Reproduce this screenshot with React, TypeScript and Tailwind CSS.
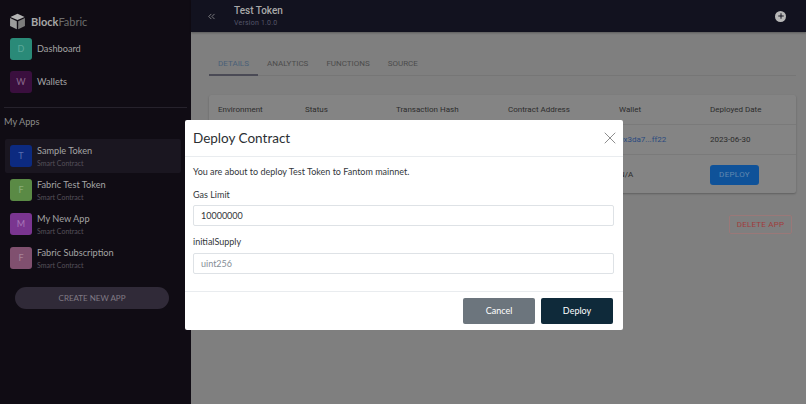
import React from "react";
import { ChevronsLeft, Plus, X } from "lucide-react";

// colours are the dimmed ones, as seen behind the modal backdrop
const apps = [
  { letter: "T", name: "Sample Token", color: "bg-[#0c2a80] text-[#5a70b0]", active: true },
  { letter: "F", name: "Fabric Test Token", color: "bg-[#5a8a45] text-[#8aae78]" },
  { letter: "M", name: "My New App", color: "bg-[#7a3590] text-[#a878b8]" },
  { letter: "F", name: "Fabric Subscription", color: "bg-[#80506f] text-[#a88498]" },
];

const columns = ["Environment", "Status", "Transaction Hash", "Contract Address", "Wallet", "Deployed Date"];
const colGrid = "grid grid-cols-[87px_91px_112px_111px_91px_1fr] pl-[9px] items-center";

const Logo = () => (
  <svg viewBox="0 0 24 24" className="w-[17px] h-[17px]">
    <path d="M12 1 L22 5.5 L12 10 L2 5.5 Z" fill="#b4b4b4" />
    <path d="M1.5 7 L11 11.5 V23 L1.5 18.5 Z" fill="#9c9c9c" />
    <path d="M22.5 7 L13 11.5 V23 L22.5 18.5 Z" fill="#7c7c7c" />
  </svg>
);

const Sidebar = () => (
  <aside className="w-[191px] shrink-0 h-full bg-[#100c14] font-['Lato',sans-serif]">
    <div className="flex items-start gap-[5px] pl-[9px] pt-[13px] h-[38px]">
      <Logo />
      <span className="text-[11px] leading-[17px] text-[#a8a8a8]">
        <span className="font-bold">Block</span>
        <span className="text-[#6c6c6c]">Fabric</span>
      </span>
    </div>
    <div className="pl-[10px] flex flex-col gap-[11px]">
      <div className="flex items-center gap-[5px] h-[22px]">
        <div className="w-[22px] h-[22px] rounded-[3px] bg-[#2a8a78] text-[#5aa898] text-[9px] flex items-center justify-center">D</div>
        <span className="text-[9.2px] text-[#a4a4a4]">Dashboard</span>
      </div>
      <div className="flex items-center gap-[5px] h-[22px]">
        <div className="w-[22px] h-[22px] rounded-[3px] bg-[#3a0f3e] text-[#8a6a8c] text-[9px] flex items-center justify-center">W</div>
        <span className="text-[9.2px] text-[#a4a4a4]">Wallets</span>
      </div>
    </div>
    <div className="mx-[4px] mt-[14px] border-t border-[#26222c]" />
    <div className="pl-[4px] mt-[7px] text-[9.2px] leading-[14px] text-[#8c8c8c]">My Apps</div>
    <div className="mt-[10px] flex flex-col">
      {apps.map((app) => (
        <div
          key={app.name}
          className={`ml-[5px] mr-[10px] h-[34px] pl-[5px] flex items-center gap-[5px] rounded-[2px] ${app.active ? "bg-[#1a1620]" : ""}`}
        >
          <div className={`w-[22px] h-[22px] rounded-[3px] text-[9px] flex items-center justify-center ${app.color}`}>{app.letter}</div>
          <div className="flex flex-col">
            <span className="text-[9.2px] leading-[14px] text-[#a4a4a4]">{app.name}</span>
            <span className="text-[7px] leading-[10px] text-[#55505a]">Smart Contract</span>
          </div>
        </div>
      ))}
    </div>
    <div className="ml-[15px] mr-[22px] mt-[12px] h-[22px] rounded-full bg-[#302a38] text-[#807a85] text-[8px] flex items-center justify-center">CREATE NEW APP</div>
  </aside>
);

const Main = () => (
  <main className="flex-1 h-full bg-[#7f7f7f] font-['Roboto',sans-serif] flex flex-col">
    <header className="h-[32px] shrink-0 bg-[#12121f] flex items-center justify-between pl-[15px] pr-[20px] shadow-[0_1px_2px_rgba(0,0,0,0.3)]">
      <div className="flex items-center gap-[17px]">
        <ChevronsLeft className="w-[11px] h-[11px] text-[#a8a8a8]" strokeWidth={1.5} />
        <div className="flex flex-col">
          <span className="text-[10px] leading-[14px] font-medium text-[#a8a8a8]">Test Token</span>
          <span className="text-[7px] leading-[11px] text-[#55566a] tracking-[0.2px]">Version 1.0.0</span>
        </div>
      </div>
      <div className="w-[11px] h-[11px] rounded-full bg-[#b8b8b8] flex items-center justify-center">
        <Plus className="w-[8px] h-[8px] text-[#12121f]" strokeWidth={3} />
      </div>
    </header>
    <div className="ml-[18px] mr-[10px] mt-[21px]">
      <nav className="flex border-b border-[#767676] h-[23px] text-[8px] text-[#4c4c4c]">
        <div className="w-[49px] h-[23px] flex items-start justify-center pt-[5px] border-b-2 border-[#4a4a55] text-[#4a6078]">DETAILS</div>
        <div className="ml-[9px] pt-[5px]">ANALYTICS</div>
        <div className="ml-[18px] pt-[5px]">FUNCTIONS</div>
        <div className="ml-[18px] pt-[5px]">SOURCE</div>
      </nav>
      <div className="mt-[19px] bg-[#848484] rounded-[2px] shadow-[0_1px_2px_rgba(0,0,0,0.25)] text-[8px] text-[#2c2c2c]">
        <div className={`${colGrid} h-[30px] pt-[1px] border-b border-[#7a7a7a]`}>
          {columns.map((c) => (
            <div key={c}>{c}</div>
          ))}
        </div>
        <div className={`${colGrid} h-[30px] pt-[1px] border-b border-[#7a7a7a]`}>
          <div className="col-start-5 text-[#2a4a80]">0x3da7...ff22</div>
          <div>2023-06-30</div>
        </div>
        <div className={`${colGrid} h-[38px] pt-[1px]`}>
          <div className="col-start-5">N/A</div>
          <div>
            <div className="w-[49px] h-[20px] rounded-[3px] bg-[#0f5299] text-[#6088b0] tracking-[0.3px] flex items-center justify-center">DEPLOY</div>
          </div>
        </div>
      </div>
      <div className="mt-[22px] flex justify-end pr-[4px]">
        <div className="w-[63px] h-[19px] rounded-[2px] border border-[#9a7878] text-[#a03c3c] text-[8px] tracking-[0.2px] flex items-center justify-center">DELETE APP</div>
      </div>
    </div>
  </main>
);

const Modal = () => (
  <div className="absolute left-[185px] top-[120px] w-[438px] h-[210px] bg-white rounded-[2px] flex flex-col text-[#212529] font-['Lato',sans-serif]">
    <div className="h-[37px] shrink-0 border-b border-[#e9ecef] flex items-center justify-between pl-[8px] pr-[3px]">
      <span className="text-[13.5px] text-[#2b2f33]">Deploy Contract</span>
      <X className="w-[20px] h-[20px] text-[#666]" strokeWidth={0.9} />
    </div>
    <div className="flex-1 pl-[8px] pr-[9px] pt-[9px] text-[9px]">
      <p className="leading-[12px] text-[#33373b]">You are about to deploy Test Token to Fantom mainnet.</p>
      <div className="mt-[11px] leading-[12px] text-[#33373b]">Gas Limit</div>
      <div className="mt-[4px] h-[21px] border border-[#dee2e6] rounded-[2px] flex items-center pl-[7px] text-[#33373b]">10000000</div>
      <div className="mt-[10px] leading-[12px] text-[#33373b]">initialSupply</div>
      <div className="mt-[5px] h-[21px] border border-[#dee2e6] rounded-[2px] flex items-center pl-[7px] text-[#868e96]">uint256</div>
    </div>
    <div className="h-[39px] shrink-0 border-t border-[#e9ecef] flex items-center justify-end gap-[6px] pr-[10px] text-[9px]">
      <div className="w-[72px] h-[26px] rounded-[2px] bg-[#6c757d] text-white flex items-center justify-center">Cancel</div>
      <div className="w-[72px] h-[26px] rounded-[2px] bg-[#0f2a3a] text-white flex items-center justify-center">Deploy</div>
    </div>
  </div>
);

export default function App() {
  return (
    <div className="w-[806px] h-[404px] flex overflow-hidden relative">
      <Sidebar />
      <Main />
      <Modal />
    </div>
  );
}
